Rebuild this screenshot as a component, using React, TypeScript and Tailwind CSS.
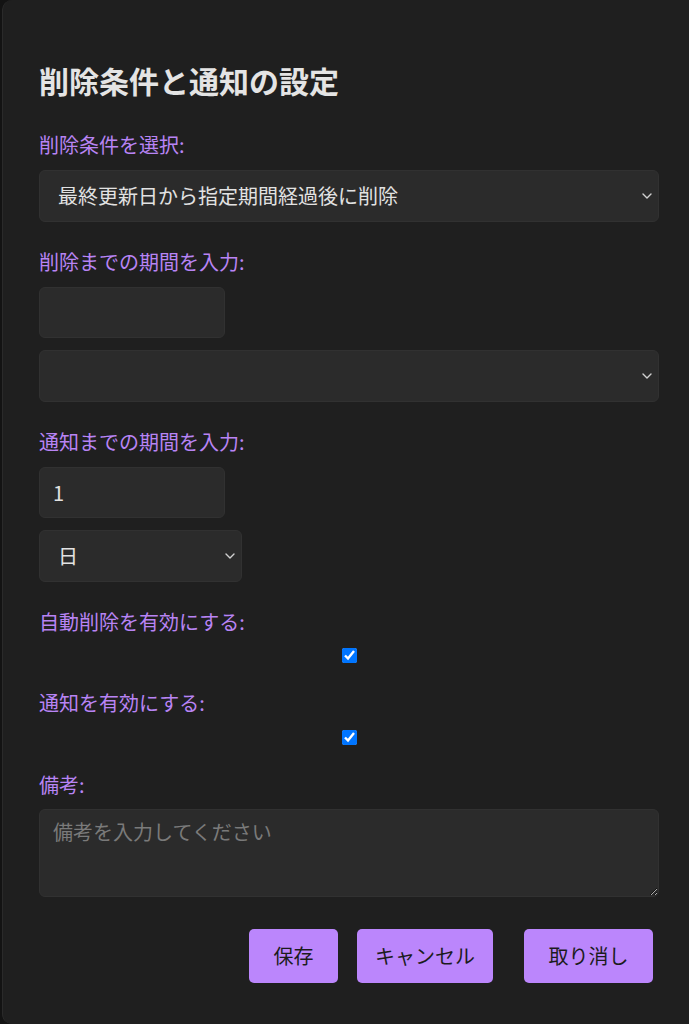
import React from "react";

const Chevron = () => (
  <svg
    className="pointer-events-none absolute right-[7px] top-1/2 -translate-y-1/2"
    width="10"
    height="6"
    viewBox="0 0 10 6"
    fill="none"
  >
    <path d="M1 1l4 4 4-4" stroke="#d0d0d0" strokeWidth="1.4" strokeLinecap="round" strokeLinejoin="round" />
  </svg>
);

const Select = ({ value, width }: { value: string; width: string }) => (
  <div className={`relative ${width}`}>
    <select
      defaultValue={value}
      className="block w-full h-[52px] appearance-none rounded-[6px] border border-[#313131] bg-[#2b2b2b] pl-[18px] pr-8 text-[20px] text-[#e2e2e2] outline-none"
    >
      <option value={value}>{value}</option>
    </select>
    <Chevron />
  </div>
);

const Label = ({ text, className = "" }: { text: string; className?: string }) => (
  <label className={`block text-[20px] leading-[28px] text-[#b884f4] ${className}`}>{text}</label>
);

export default function App() {
  return (
    <div
      className="w-full h-[1024px] overflow-hidden bg-[#131313]"
      style={{ fontFamily: '"Noto Sans CJK JP", "Noto Sans", sans-serif' }}
    >
      <div className="ml-[2px] w-[720px] h-[1024px] rounded-l-[10px] border-l border-[#2a2a2a] bg-[#1f1f1f] pl-[36px] pt-[62px]">
        <div className="w-[620px]">
          <h2 className="text-[30px] font-bold leading-[36px] text-[#e4e4e4] mb-[33px]">削除条件と通知の設定</h2>

          <Label text="削除条件を選択:" className="mb-[11px]" />
          <Select value="最終更新日から指定期間経過後に削除" width="w-full" />

          <Label text="削除までの期間を入力:" className="mt-[26px] mb-[11px]" />
          <input
            type="number"
            className="block w-[186px] h-[51px] rounded-[6px] border border-[#313131] bg-[#2b2b2b] px-[14px] text-[20px] text-[#e2e2e2] outline-none"
          />
          <div className="mt-[12px]">
            <Select value="" width="w-full" />
          </div>

          <Label text="通知までの期間を入力:" className="mt-[26px] mb-[11px]" />
          <input
            type="number"
            defaultValue={1}
            className="block w-[186px] h-[51px] rounded-[6px] border border-[#313131] bg-[#2b2b2b] px-[13px] text-[20px] text-[#e2e2e2] outline-none"
          />
          <div className="mt-[12px]">
            <Select value="日" width="w-[203px]" />
          </div>

          <Label text="自動削除を有効にする:" className="mt-[26px]" />
          <input type="checkbox" defaultChecked className="block mx-auto mt-[12px] w-[15px] h-[15px]" />

          <Label text="通知を有効にする:" className="mt-[26px]" />
          <input type="checkbox" defaultChecked className="block mx-auto mt-[13px] w-[15px] h-[15px]" />

          <Label text="備考:" className="mt-[26px] mb-[10px]" />
          <textarea
            placeholder="備考を入力してください"
            className="block w-full h-[88px] rounded-[6px] border border-[#313131] bg-[#2b2b2b] px-[13px] py-[8px] text-[20px] leading-[28px] text-[#e2e2e2] placeholder-[#7a7a7a] outline-none"
          />

          <div className="mt-[32px] flex justify-end pr-[6px]">
            <button className="w-[89px] h-[54px] rounded-[5px] bg-[#bb86fc] text-[20px] text-[#1c1c1c]">保存</button>
            <button className="ml-[19px] w-[136px] h-[54px] rounded-[5px] bg-[#bb86fc] text-[20px] text-[#1c1c1c]">キャンセル</button>
            <button className="ml-[31px] w-[129px] h-[54px] rounded-[5px] bg-[#bb86fc] text-[20px] text-[#1c1c1c]">取り消し</button>
          </div>
        </div>
      </div>
    </div>
  );
}
